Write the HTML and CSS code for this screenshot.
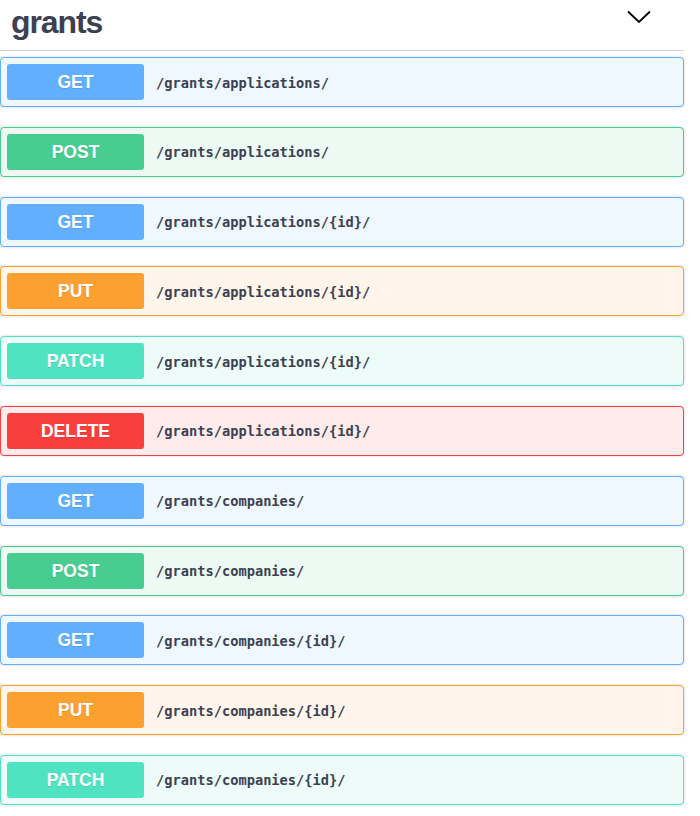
FILE: index.html
```html
<!DOCTYPE html>
<html>
<head>
<meta charset="utf-8">
<link rel="stylesheet" href="styles.css">
</head>
<body>
<div class="wrap">
  <div class="tag">
    <h3 class="tag-title">grants</h3>
    <svg class="chev" width="24" height="14" viewBox="0 0 24 14"><path d="M1 1.5 L12 12 L23 1.5" fill="none" stroke="#000" stroke-width="1.8"/></svg>
  </div>
  <div class="op get"><span class="method">GET</span><span class="path">/grants/applications/</span></div>
  <div class="op post"><span class="method">POST</span><span class="path">/grants/applications/</span></div>
  <div class="op get"><span class="method">GET</span><span class="path">/grants/applications/{id}/</span></div>
  <div class="op put"><span class="method">PUT</span><span class="path">/grants/applications/{id}/</span></div>
  <div class="op patch"><span class="method">PATCH</span><span class="path">/grants/applications/{id}/</span></div>
  <div class="op delete"><span class="method">DELETE</span><span class="path">/grants/applications/{id}/</span></div>
  <div class="op get"><span class="method">GET</span><span class="path">/grants/companies/</span></div>
  <div class="op post"><span class="method">POST</span><span class="path">/grants/companies/</span></div>
  <div class="op get"><span class="method">GET</span><span class="path">/grants/companies/{id}/</span></div>
  <div class="op put"><span class="method">PUT</span><span class="path">/grants/companies/{id}/</span></div>
  <div class="op patch"><span class="method">PATCH</span><span class="path">/grants/companies/{id}/</span></div>
</div>
</body>
</html>
```
FILE: styles.css
```css
html, body { margin: 0; padding: 0; background: #fff; }
.wrap { width: 684px; }
.tag {
  display: flex;
  justify-content: space-between;
  align-items: flex-start;
  height: 49.5px;
  border-bottom: 1px solid #d0d2d6;
  padding-left: 11px;
  padding-right: 33px;
  margin-bottom: 6.5px;
  box-sizing: content-box;
}
.tag-title {
  margin: 0;
  padding-top: 2.5px;
  font-family: "Liberation Sans", Arial, sans-serif;
  font-weight: 700;
  font-size: 32px;
  letter-spacing: -1.1px;
  line-height: 38px;
  color: #3b4151;
}
.chev { margin-top: 10px; display: block; }
.op {
  display: flex;
  align-items: center;
  height: 36px;
  padding: 6px;
  border: 1px solid;
  border-radius: 4px;
  box-shadow: 0 0 3px rgba(0,0,0,.19);
  margin-bottom: 19.8px;
}
.method {
  width: 137px;
  height: 36px;
  box-sizing: border-box;
  padding-top: 1px;
  display: flex;
  align-items: center;
  justify-content: center;
  border-radius: 3px;
  color: #fff;
  font-family: "Liberation Sans", Arial, sans-serif;
  font-weight: 700;
  font-size: 17.5px;
  text-shadow: 0 1px 0 rgba(0,0,0,.1);
  flex: none;
}
.path {
  margin-left: 12px;
  padding-top: 1px;
  font-family: "DejaVu Sans Mono", monospace;
  font-weight: 700;
  font-size: 13.7px;
  color: #3b4151;
}
.get { border-color: #61affe; background: #eff7ff; }
.get .method { background: #61affe; }
.post { border-color: #49cc90; background: #edfaf4; }
.post .method { background: #49cc90; }
.put { border-color: #fca130; background: #fff5ea; }
.put .method { background: #fca130; }
.patch { border-color: #50e3c2; background: #edfcf9; }
.patch .method { background: #50e3c2; }
.delete { border-color: #f93e3e; background: #feecec; }
.delete .method { background: #f93e3e; }
```
